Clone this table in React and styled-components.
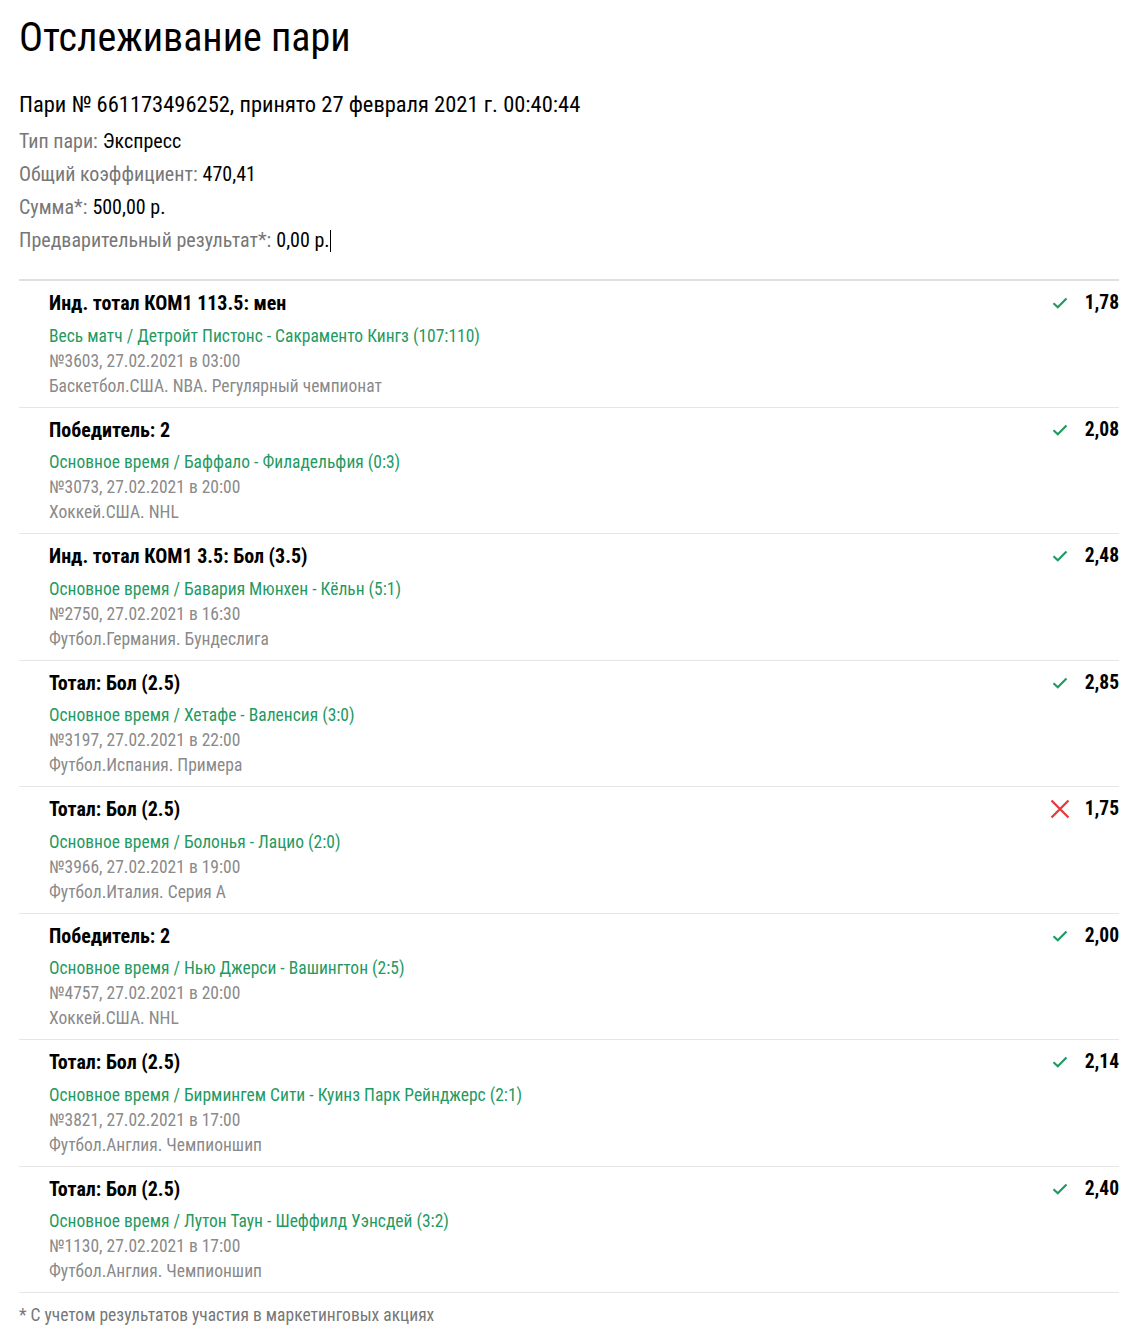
import styled, { createGlobalStyle } from "styled-components";

const bets = [
    { title: "Инд. тотал КОМ1 113.5: мен", event: "Весь матч / Детройт Пистонс - Сакраменто Кингз (107:110)", info: "№3603, 27.02.2021 в 03:00", league: "Баскетбол.США. NBA. Регулярный чемпионат", odds: "1,78", won: true },
    { title: "Победитель: 2", event: "Основное время / Баффало - Филадельфия (0:3)", info: "№3073, 27.02.2021 в 20:00", league: "Хоккей.США. NHL", odds: "2,08", won: true },
    { title: "Инд. тотал КОМ1 3.5: Бол (3.5)", event: "Основное время / Бавария Мюнхен - Кёльн (5:1)", info: "№2750, 27.02.2021 в 16:30", league: "Футбол.Германия. Бундеслига", odds: "2,48", won: true },
    { title: "Тотал: Бол (2.5)", event: "Основное время / Хетафе - Валенсия (3:0)", info: "№3197, 27.02.2021 в 22:00", league: "Футбол.Испания. Примера", odds: "2,85", won: true },
    { title: "Тотал: Бол (2.5)", event: "Основное время / Болонья - Лацио (2:0)", info: "№3966, 27.02.2021 в 19:00", league: "Футбол.Италия. Серия А", odds: "1,75", won: false },
    { title: "Победитель: 2", event: "Основное время / Нью Джерси - Вашингтон (2:5)", info: "№4757, 27.02.2021 в 20:00", league: "Хоккей.США. NHL", odds: "2,00", won: true },
    { title: "Тотал: Бол (2.5)", event: "Основное время / Бирмингем Сити - Куинз Парк Рейнджерс (2:1)", info: "№3821, 27.02.2021 в 17:00", league: "Футбол.Англия. Чемпионшип", odds: "2,14", won: true },
    { title: "Тотал: Бол (2.5)", event: "Основное время / Лутон Таун - Шеффилд Уэнсдей (3:2)", info: "№1130, 27.02.2021 в 17:00", league: "Футбол.Англия. Чемпионшип", odds: "2,40", won: true },
];

export default function App(){
    return (
        <>
            <GlobalStyle />
            <Page>
                <Title>Отслеживание пари</Title>
                <Subtitle>Пари № 661173496252, принято 27 февраля 2021 г. 00:40:44</Subtitle>
                <Summary>
                    <Line><span>Тип пари:</span> <b>Экспресс</b></Line>
                    <Line><span>Общий коэффициент:</span> <b>470,41</b></Line>
                    <Line><span>Сумма*:</span> <b>500,00 р.</b></Line>
                    <Line><span>Предварительный результат*:</span> <b>0,00 р.</b><Caret /></Line>
                </Summary>
                <List>
                    {bets.map((bet, index) => (
                        <Bet key={index} {...bet} />
                    ))}
                </List>
                <Note>* С учетом результатов участия в маркетинговых акциях</Note>
            </Page>
        </>
    );
}

function Bet({ title, event, info, league, odds, won }){
    return (
        <Row>
            <Details>
                <BetTitle>{title}</BetTitle>
                <Event>{event}</Event>
                <Meta>{info}</Meta>
                <Meta>{league}</Meta>
            </Details>
            <Result>
                <Status>{won ? <CheckIcon /> : <CrossIcon />}</Status>
                <Odds>{odds}</Odds>
            </Result>
        </Row>
    );
}

function CheckIcon(){
    return (
        <svg width="16" height="12" viewBox="0 0 16 12">
            <path d="M1.5 6.2 L5.8 10.2 L14.5 1.5" fill="none" stroke="#1f9a63" strokeWidth="2.2" />
        </svg>
    );
}

function CrossIcon(){
    return (
        <svg width="20" height="20" viewBox="0 0 20 20">
            <path d="M1.5 1.5 L18.5 18.5 M18.5 1.5 L1.5 18.5" fill="none" stroke="#e8383d" strokeWidth="2.3" />
        </svg>
    );
}

const GlobalStyle = createGlobalStyle`
    body{
        margin:0;
        background:#ffffff;
        font-family: "Roboto Condensed", Roboto, "Liberation Sans", sans-serif;
        color:#000000;
    }
`;

const Page = styled.div`
    width:1100px;
    padding:14px 0 0 19px;
`;

const Title = styled.h1`
    margin:0;
    font-weight:400;
    font-size:40px;
    line-height:48px;
`;

const Subtitle = styled.div`
    margin-top:29px;
    font-size:22.5px;
    line-height:26px;
`;

const Summary = styled.div`
    margin-top:8px;
    padding-bottom:22px;
    border-bottom:2px solid #e0e0e0;
`;

const Line = styled.div`
    display:flex;
    align-items:center;
    gap:5px;
    font-size:20px;
    line-height:33px;
    span{
        color:#777777;
    }
    b{
        font-weight:400;
        color:#000000;
    }
`;

const Caret = styled.i`
    display:inline-block;
    width:1px;
    height:22px;
    margin-left:-5px;
    background:#000000;
`;

const List = styled.div`
    display:flex;
    flex-direction:column;
`;

const Row = styled.div`
    display:flex;
    justify-content:space-between;
    padding:10px 0 8px 30px;
    border-bottom:1px solid #e6e6e6;
`;

const Details = styled.div`
    display:flex;
    flex-direction:column;
`;

const BetTitle = styled.div`
    font-weight:700;
    font-size:20px;
    line-height:24px;
    margin-bottom:8.5px;
`;

const Event = styled.div`
    color:#1f9a63;
    font-size:17.5px;
    line-height:25px;
`;

const Meta = styled.div`
    color:#8a8a8a;
    font-size:17.5px;
    line-height:25px;
`;

const Result = styled.div`
    display:flex;
    align-items:flex-start;
    gap:14px;
    height:24px;
`;

const Status = styled.div`
    display:flex;
    align-items:center;
    justify-content:center;
    width:22px;
    height:24px;
`;

const Odds = styled.div`
    font-weight:700;
    font-size:19.5px;
    line-height:24px;
`;

const Note = styled.div`
    padding-top:10px;
    color:#777777;
    font-size:17.5px;
    line-height:24px;
`;
